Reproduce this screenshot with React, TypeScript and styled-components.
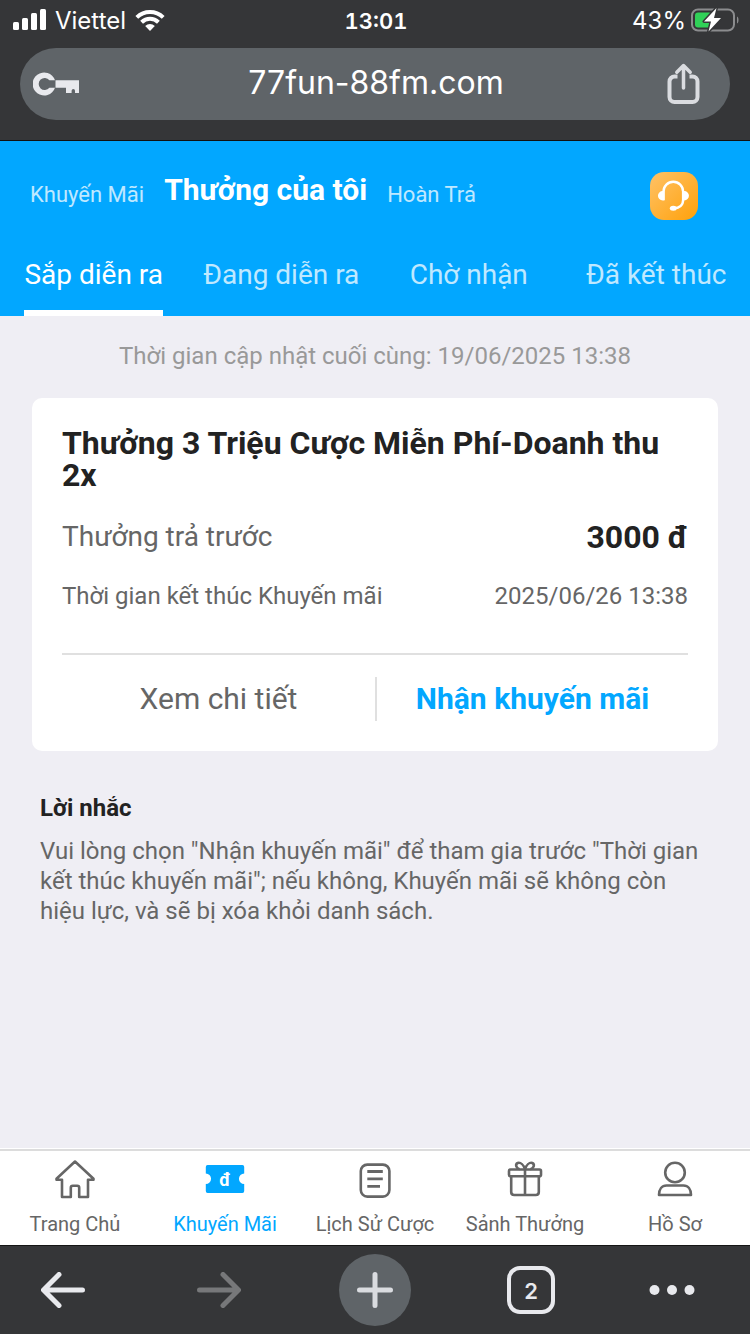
import React, { useState } from "react";
import styled, { createGlobalStyle } from "styled-components";

const colors = {
  chrome: "#353638",
  pill: "#5f6468",
  chromeIcon: "#e8e9ed",
  blue: "#02a7ff",
  page: "#efeef4",
  ink: "#222222",
  text: "#666666",
  muted: "#999999",
  line: "#e0e0e0",
};

const GlobalStyle = createGlobalStyle`
  *, *::before, *::after { box-sizing: border-box; }
  body {
    margin: 0;
    background: ${colors.page};
    color: ${colors.text};
    font-family: Roboto, "Noto Sans", sans-serif;
  }
  button, input { font: inherit; color: inherit; border: 0; padding: 0; background: none; }
  button { cursor: pointer; }
  a { color: inherit; text-decoration: none; }
  h1, h2, p, dl, dd, dt { margin: 0; font-weight: inherit; font-size: inherit; }
  svg { display: block; }
`;

const Screen = styled.div`
  display: flex;
  flex-direction: column;
  min-height: 100vh;
`;

/* Browser chrome */

const BrowserTop = styled.header`
  background: ${colors.chrome};
  border-bottom: 1px solid #111;
  color: #fff;
  font-family: Inter, "Liberation Sans", sans-serif;
`;

const StatusBar = styled.div`
  display: grid;
  grid-template-columns: 1fr auto 1fr;
  align-items: center;
  height: 40px;
  padding: 0 11px 0 13px;
  font-size: 24px;
  line-height: 42px;
`;

const StatusGroup = styled.div<{ $end?: boolean }>`
  display: flex;
  align-items: center;
  justify-content: ${(p) => (p.$end ? "flex-end" : "flex-start")};
  gap: ${(p) => (p.$end ? 5 : 9)}px;
  height: 40px;
`;

const Clock = styled.time`
  height: 40px;
  font-size: 22px;
  font-weight: 600;
  font-variant-numeric: tabular-nums;
`;

const StatusText = styled.span`
  height: 40px;
`;

const AddressBar = styled.div`
  display: flex;
  align-items: center;
  height: 72px;
  margin: 8px 20px 20px;
  padding: 0 30px 0 13px;
  border-radius: 36px;
  background: ${colors.pill};
`;

const PasswordButton = styled.button`
  width: 52px;
`;

const Address = styled.input`
  flex: 1;
  min-width: 0;
  height: 72px;
  padding-bottom: 4px;
  font-size: 32px;
  text-align: center;
  outline: none;
`;

const BrowserBottom = styled.nav`
  display: flex;
  justify-content: space-between;
  padding: 0 38px 0 8px;
  border-top: 1px solid #151515;
  background: ${colors.chrome};
  color: ${colors.chromeIcon};
`;

const ToolButton = styled.button<{ $dim?: boolean }>`
  display: flex;
  align-items: center;
  justify-content: center;
  width: 110px;
  height: 88px;
  color: ${(p) => (p.$dim ? "#77787a" : "inherit")};

  &:last-child {
    width: 80px;
  }
`;

const NewTabDisc = styled.span`
  display: grid;
  place-items: center;
  width: 72px;
  height: 72px;
  border-radius: 50%;
  background: ${colors.pill};
  color: #dadce0;
`;

const TabCount = styled.span`
  width: 48px;
  height: 48px;
  border: 4px solid currentColor;
  border-radius: 13px;
  font: 600 22px/42px Inter, sans-serif;
`;

/* Page header */

const PageHeader = styled.header`
  background: ${colors.blue};
  color: #fff;
`;

const Sections = styled.nav`
  display: flex;
  align-items: flex-start;
  gap: 20px;
  height: 109px;
  padding: 31px 52px 0 30px;
`;

const SectionLink = styled.a<{ $active?: boolean }>`
  font-size: ${(p) => (p.$active ? 30 : 22)}px;
  font-weight: ${(p) => (p.$active ? 700 : 400)};
  line-height: ${(p) => (p.$active ? 35 : 45)}px;
  opacity: ${(p) => (p.$active ? 1 : 0.75)};
`;

const SupportButton = styled.button`
  margin-left: auto;
`;

const Tabs = styled.div`
  display: grid;
  grid-template-columns: repeat(4, 1fr);
  justify-items: center;
`;

const Tab = styled.button<{ $active: boolean }>`
  height: 66px;
  padding-bottom: 10px;
  border-bottom: 6px solid ${(p) => (p.$active ? "#fff" : "transparent")};
  color: ${(p) => (p.$active ? "#fff" : "rgba(255, 255, 255, 0.75)")};
  font-size: 28px;
  line-height: 50px;
  white-space: nowrap;
`;

/* Page content */

const Content = styled.main`
  flex: 1;
  padding: 24px 32px;
`;

const Updated = styled.p`
  margin-bottom: 26px;
  color: ${colors.muted};
  font-size: 24px;
  line-height: 32px;
  text-align: center;
`;

const Card = styled.article`
  padding: 29px 30px 30px;
  border-radius: 10px;
  background: #fff;
`;

const CardTitle = styled.h1`
  margin-bottom: 28px;
  color: ${colors.ink};
  font-size: 32px;
  font-weight: 700;
  line-height: 32px;
`;

const Row = styled.div<{ $large?: boolean }>`
  display: flex;
  align-items: center;
  justify-content: space-between;
  margin-bottom: ${(p) => (p.$large ? 23 : 39)}px;
  font-size: ${(p) => (p.$large ? 28 : 24)}px;
  line-height: 36px;
`;

const Amount = styled.dd`
  color: ${colors.ink};
  font-size: 32px;
  font-weight: 700;
`;

const Actions = styled.div`
  display: grid;
  grid-template-columns: 1fr 1fr;
  padding-top: 22px;
  border-top: 2px solid ${colors.line};
`;

const Action = styled.button<{ $primary?: boolean }>`
  height: 44px;
  border-left: ${(p) => (p.$primary ? `2px solid ${colors.line}` : "0")};
  color: ${(p) => (p.$primary ? colors.blue : colors.text)};
  font-size: 30px;
  font-weight: ${(p) => (p.$primary ? 700 : 400)};
  line-height: 44px;
`;

const Reminder = styled.section`
  padding: 42px 8px 0;
  font-size: 24px;
  line-height: 30px;
`;

const ReminderTitle = styled.h2`
  margin-bottom: 13px;
  color: ${colors.ink};
  font-weight: 700;
`;

/* Site navigation */

const SiteNav = styled.nav`
  display: grid;
  grid-template-columns: repeat(5, 1fr);
  border-top: 2px solid #dcdcdc;
  background: #fff;
  box-shadow: 0 -1px #fff;
`;

const SiteLink = styled.a<{ $active?: boolean }>`
  display: flex;
  flex-direction: column;
  align-items: center;
  gap: 9px;
  height: 94px;
  padding-top: 9px;
  color: ${(p) => (p.$active ? colors.blue : colors.text)};
  font-size: 20px;
  line-height: 30px;
  white-space: nowrap;
`;

const SignalIcon = () => (
  <svg width="33" height="22" viewBox="0 0 33 22" fill="#fff" aria-hidden="true">
    <rect x="0" y="13" width="6" height="8" rx="1.5" />
    <rect x="9" y="9" width="6" height="12" rx="1.5" />
    <rect x="18" y="4" width="6" height="17" rx="1.5" />
    <rect x="27" y="0" width="6" height="21" rx="1.5" />
  </svg>
);

const WifiIcon = () => (
  <svg width="30" height="22" viewBox="0 0 30 22" aria-hidden="true">
    <g fill="none" stroke="#fff" strokeWidth="4">
      <path d="M1.8 8.4a19 19 0 0 1 26.400 0" />
      <path d="M6.600 13.200a12 12 0 0 1 16.800 0" />
    </g>
    <path fill="#fff" d="M10.200 17a7 7 0 0 1 9.600 0L15 22z" />
  </svg>
);

const BatteryIcon = () => (
  <svg width="48" height="24" viewBox="0 0 48 24" aria-hidden="true">
    <rect x="1" y="1.500" width="42" height="21" rx="6" fill="none" stroke="#8b8c8e" strokeWidth="2" />
    <path d="M46 8.500c2 .8 2 6.200 0 7z" fill="#8b8c8e" />
    <rect x="4" y="4.500" width="17" height="15" rx="3" fill="#30d158" />
    <path
      d="M25.500 0 13 13.500h7L17.500 23.500 30 10h-7z"
      fill="#fff"
      stroke={colors.chrome}
      strokeWidth="3"
      strokeLinejoin="round"
      paintOrder="stroke"
    />
  </svg>
);

const KeyIcon = () => (
  <svg width="46" height="24" viewBox="0 0 46 24" aria-hidden="true">
    <path
      fill={colors.chromeIcon}
      d="M22 8.300A11.500 11.500 0 1 0 22 15.700h-5.600a6 6 0 1 1 0-7.400z"
    />
    <path fill={colors.chromeIcon} d="M22.500 8.300H46V21h-4v-2.300a1.700 1.700 0 0 0-3.400 0V21H33v-5.300H22.500z" />
  </svg>
);

const ShareIcon = () => (
  <svg width="33" height="42" viewBox="0 0 33 42" fill="none" stroke="#dadce0" strokeWidth="4" aria-hidden="true">
    <path d="M10.500 13.500H7.500a5 5 0 0 0-5 5v15.500a5 5 0 0 0 5 5h18a5 5 0 0 0 5-5V18.500a5 5 0 0 0-5-5h-3" />
    <path strokeWidth="3.500" strokeLinecap="round" strokeLinejoin="round" d="M16.500 25V3M9.800 9.200 16.500 2.500l6.700 6.700" />
  </svg>
);

const ArrowIcon = ({ forward = false }: { forward?: boolean }) => (
  <svg width="44" height="36" viewBox="0 0 44 36" fill="none" stroke="currentColor" strokeWidth="5" strokeLinecap="round" strokeLinejoin="round" aria-hidden="true">
    <path d={forward ? "M2.500 18H41M26 2.500 41.500 18 26 33.500" : "M41.500 18H3M18 2.500 2.500 18 18 33.500"} />
  </svg>
);

const PlusIcon = () => (
  <svg width="38" height="38" viewBox="0 0 38 38" stroke="currentColor" strokeWidth="5" strokeLinecap="round" aria-hidden="true">
    <path d="M19 3.500v31M3.500 19h31" />
  </svg>
);

const MoreIcon = () => (
  <svg width="46" height="12" viewBox="0 0 46 12" fill="currentColor" aria-hidden="true">
    <circle cx="5.500" cy="6" r="5" />
    <circle cx="23" cy="6" r="5" />
    <circle cx="40.500" cy="6" r="5" />
  </svg>
);

const HeadsetIcon = () => (
  <svg width="48" height="48" viewBox="0 0 48 48" aria-hidden="true">
    <defs>
      <linearGradient id="support" x1="0" y1="0" x2="1" y2="1">
        <stop offset="0" stopColor="#ffc267" />
        <stop offset="1" stopColor="#ffa10a" />
      </linearGradient>
    </defs>
    <rect width="48" height="48" rx="14" fill="url(#support)" />
    <path d="M13.500 28V19.500a9.800 9.800 0 0 1 19.600 0v8.500c0 5-3.600 8.200-9.500 8.200" fill="none" stroke="#fff" strokeWidth="2.400" />
    <path d="M14.500 19v9.500h-1.800a4.750 4.750 0 0 1 0-9.500zM32 19h2.200a4.750 4.750 0 0 1 0 9.500H32z" fill="#fff" />
    <ellipse cx="23.300" cy="36.200" rx="3.500" ry="2.500" fill="#fff" />
  </svg>
);

const navIcons = {
  home: (
    <path d="M20 1.500 1.500 18.700v1h5.500V37H15.800V27.800q0-2 2-2h4.400q2 0 2 2V37H33V19.700h5.500v-1z" strokeLinejoin="round" />
  ),
  ticket: (
    <>
      <path fill="currentColor" stroke="none" d="M3 5h34a2 2 0 0 1 2.200 2V13.500a5 5 0 0 0 0 10.500v7a2 2 0 0 1-2.200 2H3a2 2 0 0 1-2.200-2V24a5 5 0 0 0 0-10.500V7a2 2 0 0 1 2.200-2z" />
      <text x="20" y="26" fill="#fff" stroke="none" fontSize="18" fontWeight="700" textAnchor="middle">đ</text>
    </>
  ),
  history: (
    <>
      <rect x="5.800" y="4.600" width="28.600" height="32" rx="6.500" />
      <path d="M12.300 11.500h15.500M12.300 18.800h15.500M12.300 26.300h12.700" strokeWidth="2.800" />
    </>
  ),
  gift: (
    <>
      <rect x="4" y="9.500" width="32" height="6.800" rx="1.500" />
      <path d="M6.200 16.500v15.500q0 3 3 3h21.600q3 0 3-3V16.500M20 9.500v25.500M20 9C18.500 5 15.500 2 12.700 3c-2.800 1.200-1.500 5.500 2 6.200M20 9c1.500-4 4.500-7 7.300-6 2.800 1.200 1.500 5.500-2 6.200" />
    </>
  ),
  profile: (
    <>
      <circle cx="20" cy="12.500" r="9.800" />
      <path d="M11.500 25.500h17c4.500 0 7.500 3.500 7.500 9.500H4c0-6 3-9.500 7.500-9.500z" strokeLinejoin="round" />
    </>
  ),
};

const NavIcon = ({ name }: { name: keyof typeof navIcons }) => (
  <svg width="40" height="40" viewBox="0 0 40 40" fill="none" stroke="currentColor" strokeWidth="2.600" aria-hidden="true">
    {navIcons[name]}
  </svg>
);

const tabs = ["Sắp diễn ra", "Đang diễn ra", "Chờ nhận", "Đã kết thúc"];

const siteLinks: { label: string; icon: keyof typeof navIcons }[] = [
  { label: "Trang Chủ", icon: "home" },
  { label: "Khuyến Mãi", icon: "ticket" },
  { label: "Lịch Sử Cược", icon: "history" },
  { label: "Sảnh Thưởng", icon: "gift" },
  { label: "Hồ Sơ", icon: "profile" },
];

export default function App() {
  const [activeTab, setActiveTab] = useState(tabs[0]);

  return (
    <Screen>
      <GlobalStyle />
      <BrowserTop>
        <StatusBar>
          <StatusGroup>
            <SignalIcon />
            <StatusText>Viettel</StatusText>
            <WifiIcon />
          </StatusGroup>
          <Clock>13:01</Clock>
          <StatusGroup $end>
            <StatusText>43%</StatusText>
            <BatteryIcon />
          </StatusGroup>
        </StatusBar>
        <AddressBar>
          <PasswordButton aria-label="Mật khẩu"><KeyIcon /></PasswordButton>
          <Address aria-label="Địa chỉ trang" defaultValue="77fun-88fm.com" />
          <button aria-label="Chia sẻ"><ShareIcon /></button>
        </AddressBar>
      </BrowserTop>

      <PageHeader>
        <Sections aria-label="Mục">
          <SectionLink href="#khuyen-mai">Khuyến Mãi</SectionLink>
          <SectionLink href="#thuong" $active aria-current="page">Thưởng của tôi</SectionLink>
          <SectionLink href="#hoan-tra">Hoàn Trả</SectionLink>
          <SupportButton aria-label="Hỗ trợ"><HeadsetIcon /></SupportButton>
        </Sections>
        <Tabs role="tablist">
          {tabs.map((tab) => (
            <Tab key={tab} role="tab" aria-selected={tab === activeTab} $active={tab === activeTab} onClick={() => setActiveTab(tab)}>
              {tab}
            </Tab>
          ))}
        </Tabs>
      </PageHeader>

      <Content>
        <Updated>Thời gian cập nhật cuối cùng: 19/06/2025 13:38</Updated>
        <Card>
          <CardTitle>Thưởng 3 Triệu Cược Miễn Phí-Doanh thu 2x</CardTitle>
          <dl>
            <Row $large>
              <dt>Thưởng trả trước</dt>
              <Amount>3000 đ</Amount>
            </Row>
            <Row>
              <dt>Thời gian kết thúc Khuyến mãi</dt>
              <dd>2025/06/26 13:38</dd>
            </Row>
          </dl>
          <Actions>
            <Action>Xem chi tiết</Action>
            <Action $primary>Nhận khuyến mãi</Action>
          </Actions>
        </Card>
        <Reminder>
          <ReminderTitle>Lời nhắc</ReminderTitle>
          <p>
            Vui lòng chọn "Nhận khuyến mãi" để tham gia trước "Thời gian kết thúc khuyến mãi"; nếu không, Khuyến mãi sẽ
            không còn hiệu lực, và sẽ bị xóa khỏi danh sách.
          </p>
        </Reminder>
      </Content>

      <SiteNav aria-label="Điều hướng">
        {siteLinks.map(({ label, icon }) => (
          <SiteLink key={icon} href={`#${icon}`} $active={icon === "ticket"}>
            <NavIcon name={icon} />
            {label}
          </SiteLink>
        ))}
      </SiteNav>

      <BrowserBottom aria-label="Trình duyệt">
        <ToolButton aria-label="Quay lại"><ArrowIcon /></ToolButton>
        <ToolButton $dim aria-label="Tiến"><ArrowIcon forward /></ToolButton>
        <ToolButton aria-label="Thẻ mới"><NewTabDisc><PlusIcon /></NewTabDisc></ToolButton>
        <ToolButton aria-label="2 thẻ đang mở"><TabCount>2</TabCount></ToolButton>
        <ToolButton aria-label="Thêm"><MoreIcon /></ToolButton>
      </BrowserBottom>
    </Screen>
  );
}
